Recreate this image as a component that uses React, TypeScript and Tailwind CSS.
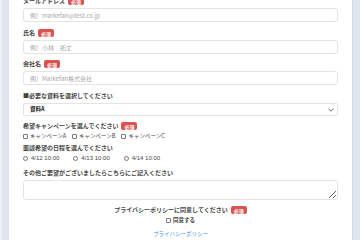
const font = { fontFamily: '"Noto Sans CJK JP", "Noto Sans", sans-serif' };

function Badge() {
  return (
    <span className="ml-[3px] inline-flex h-[8px] items-center rounded-[2px] bg-[#d9534f] px-[3px] text-[5px] font-bold leading-none text-white">
      必須
    </span>
  );
}

function Label({ text, required }: { text: string; required?: boolean }) {
  return (
    <div className="flex h-[8px] items-center text-[6px] font-bold leading-none text-[#444]">
      {text}
      {required && <Badge />}
    </div>
  );
}

function TextInput({ placeholder }: { placeholder: string }) {
  return (
    <input
      className="mt-[3px] block h-[14px] w-full rounded-[3px] border border-[#e4e4e4] px-[6px] text-[6px] text-[#333] outline-none placeholder:text-[#a8a8a8]"
      placeholder={placeholder}
    />
  );
}

function Check({ label }: { label: string }) {
  return (
    <span className="flex items-center gap-[2px]">
      <span className="h-[5px] w-[5px] rounded-[1px] border border-[#777]" />
      {label}
    </span>
  );
}

function Radio({ label }: { label: string }) {
  return (
    <span className="flex items-center gap-[3px]">
      <span className="h-[5px] w-[5px] rounded-full border border-[#777]" />
      {label}
    </span>
  );
}

export default function App() {
  return (
    <div className="flex h-[240px] w-[360px] overflow-hidden bg-[#dfe5ef]" style={font}>
      <div className="w-[2px] bg-[#eef1f6]" />
      <div className="ml-[7px] flex w-[344px] flex-col border-r border-[#d3d9e4] bg-white px-[14px]">
        <div className="-mt-[3px]">
          <Label text="メールアドレス" required />
          <TextInput placeholder="例）markefan@test.co.jp" />
        </div>
        <div className="mt-[7px]">
          <Label text="氏名" required />
          <TextInput placeholder="例）小林　拓丈" />
        </div>
        <div className="mt-[6px]">
          <Label text="会社名" required />
          <TextInput placeholder="例）Markefan株式会社" />
        </div>
        <div className="mt-[7px]">
          <Label text="■必要な資料を選択してください" />
          <div className="mt-[3px] flex h-[13px] items-center justify-between rounded-[2px] border border-[#e4e4e4] pl-[6px] pr-[3px] text-[5.5px] font-bold text-[#222]">
            資料A
            <svg width="6" height="4" viewBox="0 0 6 4" fill="none" stroke="#555" strokeWidth="0.9">
              <path d="M0.5 0.8 L3 3.2 L5.5 0.8" />
            </svg>
          </div>
        </div>
        <div className="mt-[6px]">
          <Label text="希望キャンペーンを選んでください" required />
          <div className="mt-[2px] flex h-[8px] items-center gap-[6px] text-[5.5px] text-[#444]">
            <Check label="キャンペーンA" />
            <Check label="キャンペーンB" />
            <Check label="キャンペーンC" />
          </div>
        </div>
        <div className="mt-[4px]">
          <Label text="面談希望の日程を選んでください" />
          <div
            className="mt-[2px] flex h-[8px] items-center gap-[14px] text-[6px] text-[#444]"
            style={{ fontFamily: '"Liberation Sans", "Noto Sans CJK JP", sans-serif' }}
          >
            <Radio label="4/12 10:00" />
            <Radio label="4/13 10:00" />
            <Radio label="4/14 10:00" />
          </div>
        </div>
        <div className="mt-[7px]">
          <Label text="その他ご要望がございましたらこちらにご記入ください" />
          <textarea className="mt-[3px] block h-[20px] w-full rounded-[3px] border border-[#e4e4e4] text-[6px] outline-none" />
        </div>
        <div className="mt-[6px] flex flex-col items-center">
          <div className="flex h-[8px] items-center text-[6px] font-bold leading-none text-[#444]">
            プライバシーポリシーに同意してください
            <Badge />
          </div>
          <div className="mt-[2px] flex h-[8px] items-center text-[5.5px] font-bold text-[#444]">
            <Check label="同意する" />
          </div>
          <a className="mt-[8px] text-[5.5px] leading-none text-[#4a90d9]">プライバシーポリシー</a>
        </div>
      </div>
    </div>
  );
}
